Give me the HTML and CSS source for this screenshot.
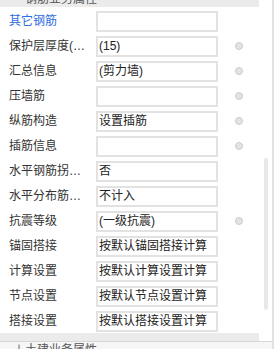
FILE: index.html
```html
<!DOCTYPE html>
<html>
<head>
<meta charset="utf-8">
<link rel="stylesheet" href="styles.css">
</head>
<body>
<div class="panel">
  <div class="main">
    <div class="content">
      <div class="group-head"><span class="head-text"><span class="toggle">－</span>钢筋业务属性</span></div>
      <div class="rows">
        <div class="row"><div class="label blue">其它钢筋</div><div class="box"></div></div>
        <div class="row"><div class="label">保护层厚度(mm)</div><div class="box">(15)</div><div class="dot"></div></div>
        <div class="row"><div class="label">汇总信息</div><div class="box">(剪力墙)</div><div class="dot"></div></div>
        <div class="row"><div class="label">压墙筋</div><div class="box"></div><div class="dot"></div></div>
        <div class="row"><div class="label">纵筋构造</div><div class="box">设置插筋</div><div class="dot"></div></div>
        <div class="row"><div class="label">插筋信息</div><div class="box"></div><div class="dot"></div></div>
        <div class="row"><div class="label">水平钢筋拐角筋</div><div class="box">否</div></div>
        <div class="row"><div class="label">水平分布筋计入</div><div class="box">不计入</div></div>
        <div class="row"><div class="label">抗震等级</div><div class="box">(一级抗震)</div><div class="dot"></div></div>
        <div class="row"><div class="label">锚固搭接</div><div class="box">按默认锚固搭接计算</div></div>
        <div class="row"><div class="label">计算设置</div><div class="box">按默认计算设置计算</div></div>
        <div class="row"><div class="label">节点设置</div><div class="box">按默认节点设置计算</div></div>
        <div class="row"><div class="label">搭接设置</div><div class="box">按默认搭接设置计算</div></div>
      </div>
      <div class="hbar"></div>
    </div>
    <div class="vscroll"><div class="thumb"></div></div>
  </div>
  <div class="next-head"><span class="next-text"><span class="toggle">＋</span>土建业务属性</span></div>
</div>
</body>
</html>
```

FILE: styles.css
```css
html, body {
  margin: 0;
  padding: 0;
  background: #ffffff;
}
body {
  width: 274px;
  height: 349px;
  overflow: hidden;
  font-family: "Liberation Sans", "Noto Sans CJK SC", sans-serif;
  font-size: 12px;
  color: #333333;
}
.panel {
  width: 274px;
  height: 349px;
  box-sizing: border-box;
  border-right: 2px solid #e2e2e2;
  overflow: hidden;
}
.main {
  display: flex;
  height: 341px;
  border-bottom: 1px solid #d8d8d8;
}
.content {
  width: 259px;
  display: flex;
  flex-direction: column;
}
.group-head {
  height: 7px;
  background: #ebebeb;
  overflow: hidden;
  padding-left: 13px;
  color: #555555;
}
.head-text {
  display: block;
  line-height: 16px;
  margin-top: -9px;
  white-space: nowrap;
}
.toggle {
  display: inline-block;
  width: 12px;
}
.rows {
  padding-top: 1px;
  display: flex;
  flex-direction: column;
}
.row {
  height: 25px;
  box-sizing: border-box;
  padding-top: 3px;
  display: flex;
  align-items: flex-start;
}
.label {
  width: 96px;
  box-sizing: border-box;
  padding-left: 9px;
  padding-right: 10px;
  line-height: 21px;
  white-space: nowrap;
  overflow: hidden;
  text-overflow: ellipsis;
  color: #333333;
}
.label.blue {
  color: #2b6de0;
}
.box {
  width: 122px;
  height: 21px;
  box-sizing: border-box;
  border: 2px solid #e2e2e2;
  padding-left: 1px;
  line-height: 17px;
  color: #222222;
  white-space: nowrap;
  overflow: hidden;
}
.dot {
  width: 8px;
  height: 8px;
  box-sizing: border-box;
  margin-left: 17px;
  margin-top: 6px;
  border-radius: 50%;
  background: #e3e3e3;
  border: 1px solid #cccccc;
}
.hbar {
  height: 8px;
  background: #ebebeb;
}
.vscroll {
  width: 13px;
}
.thumb {
  width: 4px;
  height: 152px;
  margin-left: 5px;
  margin-top: 158px;
  border-radius: 2px;
  background: #e8e8e8;
}
.next-head {
  height: 7px;
  overflow: hidden;
  padding-left: 13px;
  background: #f6f6f6;
  color: #555555;
}
.next-text {
  display: block;
  line-height: 16px;
  margin-top: 0px;
  white-space: nowrap;
}
```
